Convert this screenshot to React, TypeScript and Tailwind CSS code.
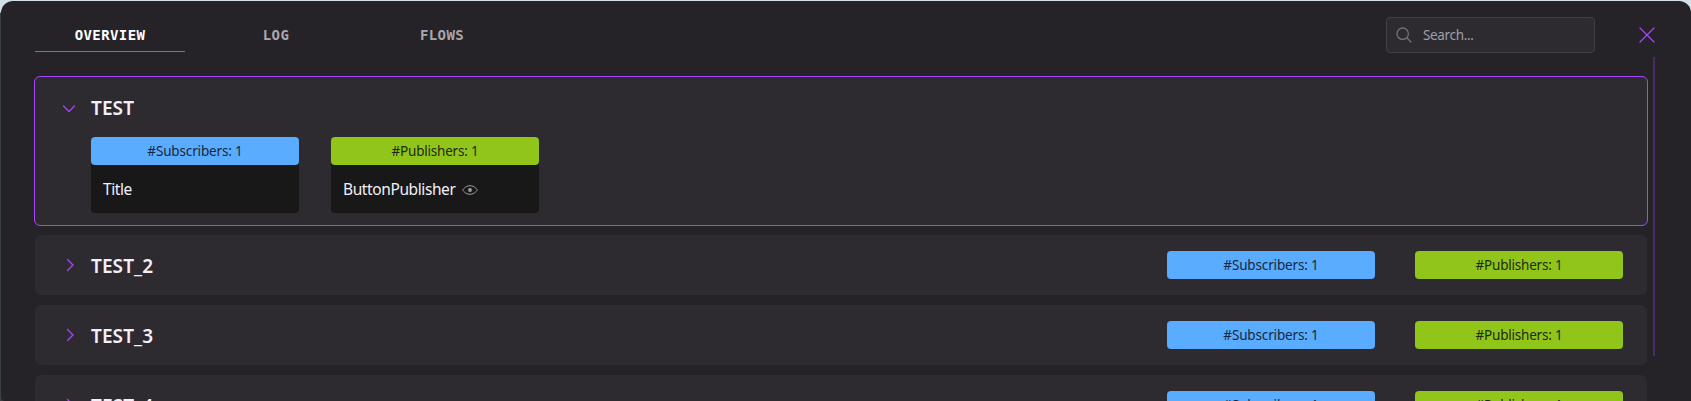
import type { ReactNode } from 'react';

const topics = ['TEST_2', 'TEST_3', 'TEST_4'];

function Tab({ label, active = false }: { label: string; active?: boolean }) {
  return (
    <button
      className={
        active
          ? 'h-[35px] w-[150px] border-b border-[#a845ff] pt-[2px] text-white'
          : 'h-[35px] w-[150px] border-b border-transparent pt-[2px] text-[#a9a6ae]'
      }
    >
      {label}
    </button>
  );
}

function Pill({ kind }: { kind: 'Subscribers' | 'Publishers' }) {
  return (
    <div
      className={
        kind === 'Subscribers'
          ? 'h-7 w-52 rounded bg-[#59acff] text-center text-[13.5px] leading-[28px] tracking-[-0.15px] text-[#18283a]'
          : 'h-7 w-52 rounded bg-[#91c51a] text-center text-[13.5px] leading-[28px] tracking-[-0.2px] text-[#202a10]'
      }
    >
      #{kind}: 1
    </div>
  );
}

function Chevron({ open = false }: { open?: boolean }) {
  return (
    <svg viewBox="0 0 16 16" className="size-4" fill="none" stroke="#a845ff" strokeWidth="1.2" strokeLinecap="round" strokeLinejoin="round">
      <path d={open ? 'M2.5 5 8 10.5l5.5-5.5' : 'M6.5 2.5 12 8l-5.5 5.5'} />
    </svg>
  );
}

function Members({ kind, children }: { kind: 'Subscribers' | 'Publishers'; children: ReactNode }) {
  return (
    <div className="h-[76px] w-52 rounded bg-[#181818]">
      <Pill kind={kind} />
      <div className="flex h-12 items-center gap-[7px] px-3 pt-[2px] text-[15.5px] tracking-[-0.4px] text-[#f3effa]">{children}</div>
    </div>
  );
}

export default function App() {
  return (
    <div className="h-[401px] w-full overflow-hidden bg-[linear-gradient(to_bottom,#d3e0e8_0,#d3e0e8_12px,#3a3f43_13px)] pt-px pl-px font-['Noto_Sans',sans-serif]">
      <div className="h-[400px] overflow-hidden rounded-t-[12px] rounded-bl-[4px] bg-[#252328]">
        <header className="flex h-[75px] items-start pt-4 pl-[34px]">
          <nav className="flex gap-4 font-['DejaVu_Sans_Mono',monospace] text-[14px] font-bold tracking-[0.4px]">
            <Tab label="OVERVIEW" active />
            <Tab label="LOG" />
            <Tab label="FLOWS" />
          </nav>
          <div className="mr-[44px] ml-auto flex h-9 w-[209px] items-center gap-[11px] rounded border border-[#414043] bg-[#2d2b30] pl-[9px] text-[13.5px] tracking-[-0.35px] text-[#9d9fa8]">
            <svg viewBox="0 0 16 16" className="size-4" fill="none" stroke="#747279" strokeWidth="1.3" strokeLinecap="round">
              <circle cx="6.7" cy="6.7" r="5.7" />
              <path d="m11 11 4 4" />
            </svg>
            <span>Search...</span>
          </div>
          <svg viewBox="0 0 16 16" className="mt-[10px] mr-[36px] size-4" fill="none" stroke="#a845ff" strokeWidth="1.2" strokeLinecap="round">
            <path d="m1 1 14 14M15 1 1 15" />
          </svg>
        </header>

        <div className="relative flex flex-col gap-[10px] pr-[44px] pl-[34px]">
          <section className="-mx-px -mb-px h-[150px] rounded-[6px] border border-[#a845ff] bg-[#2d2b30]">
            <div className="flex h-[60px] items-center pt-[3px] pl-[26px]">
              <Chevron open />
              <h2 className="ml-[14px] text-[19px] font-semibold tracking-[0.1px] text-[#f3effa]">TEST</h2>
            </div>
            <div className="flex gap-8 pl-14">
              <Members kind="Subscribers">Title</Members>
              <Members kind="Publishers">
                ButtonPublisher
                <svg viewBox="0 0 16 16" className="size-4" fill="none" stroke="#a3a1a8">
                  <path d="M.6 8S3.3 3.7 8 3.7 15.4 8 15.4 8 12.7 12.3 8 12.3.6 8 .6 8Z" />
                  <circle cx="8" cy="8" r="1.9" fill="#a3a1a8" stroke="none" />
                </svg>
              </Members>
            </div>
          </section>
          {topics.map((topic) => (
            <section key={topic} className="flex h-[60px] shrink-0 items-center rounded-[6px] bg-[#2d2b30] pr-6 pl-[26px]">
              <Chevron />
              <h2 className="ml-[14px] pt-[2px] text-[19px] font-semibold tracking-[0.1px] text-[#f3effa]">{topic}</h2>
              <div className="ml-auto flex gap-10">
                <Pill kind="Subscribers" />
                <Pill kind="Publishers" />
              </div>
            </section>
          ))}
          <div className="absolute -top-[19px] right-[36px] h-[299px] w-0.5 bg-[#4c2967]" />
        </div>
      </div>
    </div>
  );
}
